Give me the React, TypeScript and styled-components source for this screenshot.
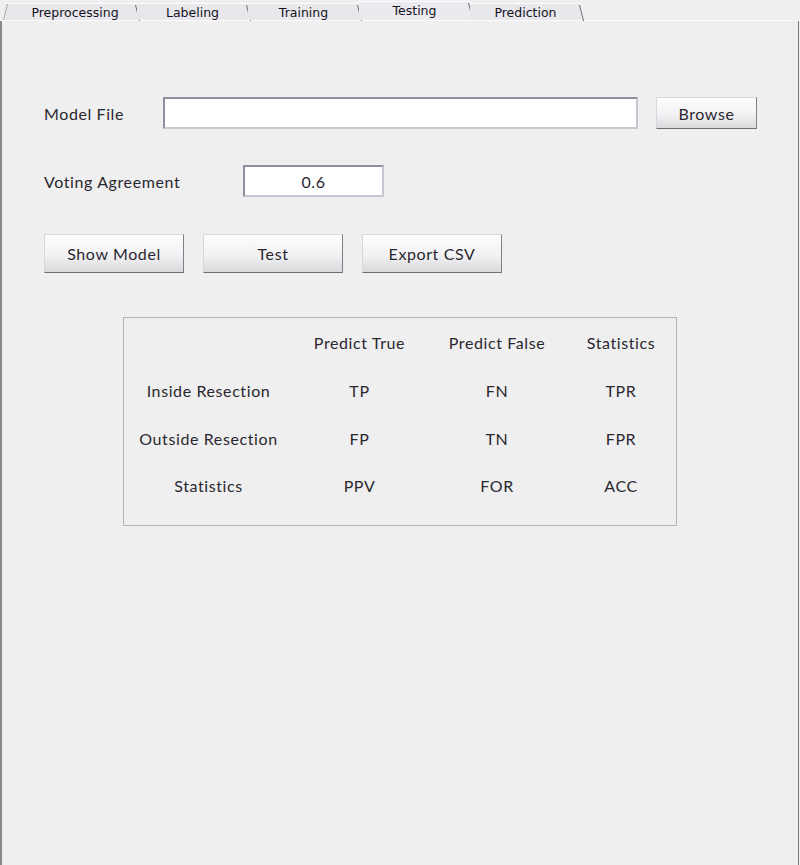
import React from "react";
import styled, { createGlobalStyle } from "styled-components";

const Global = createGlobalStyle`
  html, body { margin: 0; padding: 0; background: #efefef; }
  body { font-family: Lato, "Open Sans", sans-serif; color: #2a2731; }
  #root { width: 800px; height: 865px; }
`;

const Frame = styled.div`
  width: 800px;
  height: 865px;
  display: flex;
  flex-direction: column;
  background: #efefef;
  box-sizing: border-box;
  overflow: hidden;
`;

const TabBar = styled.div`
  height: 21px;
  display: flex;
  align-items: flex-end;
  padding-left: 5px;
  box-sizing: border-box;
  border-bottom: 1px solid #fbfbfb;
`;

const Tab = styled.div<{ $selected?: boolean; $first?: boolean }>`
  position: relative;
  width: ${(p) => (p.$first ? 132 : 111)}px;
  height: ${(p) => (p.$selected ? 19 : 17)}px;
  box-sizing: border-box;
  background: ${(p) => (p.$selected ? "#ebeaef" : "#e8e7ec")};
  border-top: 1px solid #fdfdfd;
  font-family: "DejaVu Sans", sans-serif;
  font-size: 12.5px;
  color: #14121c;
  display: flex;
  align-items: center;
  justify-content: center;
  padding-left: ${(p) => (p.$first ? 8 : 0)}px;
  padding-bottom: ${(p) => (p.$selected ? 2 : 0)}px;
  &::after {
    content: "";
    position: absolute;
    right: 1px;
    top: 1px;
    height: 16px;
    border-left: 1px solid #6e6e74;
    transform: skewX(14deg);
    transform-origin: top;
  }
  ${(p) =>
    p.$first
      ? `&::before {
    content: "";
    position: absolute;
    left: 2px;
    top: 0px;
    height: 16px;
    border-left: 1px solid #a8a8ae;
    transform: skewX(-14deg);
    transform-origin: top;
  }`
      : ""}
`;

const Panel = styled.div`
  flex: 1;
  border-left: 2px solid #8a8a8a;
  border-right: 1px solid #7a7a7a;
  margin-right: 1px;
  padding: 76px 0 0 42px;
  box-sizing: border-box;
  display: flex;
  flex-direction: column;
`;

const Row = styled.div<{ $mt?: number }>`
  display: flex;
  align-items: center;
  margin-top: ${(p) => p.$mt ?? 0}px;
`;

const Label = styled.div<{ $w: number }>`
  width: ${(p) => p.$w}px;
  font-size: 16px;
  letter-spacing: 0.6px;
`;

const Field = styled.div<{ $w: number }>`
  width: ${(p) => p.$w}px;
  height: 32px;
  box-sizing: border-box;
  background: #ffffff;
  border: 2px solid #c6c7d0;
  border-top-color: #8e8fa0;
  border-left-color: #8e8fa0;
  display: flex;
  align-items: center;
  justify-content: center;
  font-size: 16px;
  letter-spacing: 0.6px;
`;

const Button = styled.div<{ $w: number; $h?: number; $ml?: number }>`
  width: ${(p) => p.$w}px;
  height: ${(p) => p.$h ?? 39}px;
  margin-left: ${(p) => p.$ml ?? 0}px;
  box-sizing: border-box;
  background: linear-gradient(#fdfdfd, #f2f2f4 55%, #dadadd);
  border: 1px solid #d7d7dd;
  border-right-color: #808086;
  border-bottom-color: #6e6e74;
  display: flex;
  align-items: center;
  justify-content: center;
  font-size: 16px;
  letter-spacing: 0.6px;
`;

const Buttons = styled.div`
  display: flex;
  gap: 19px;
  margin-top: 37px;
`;

const Matrix = styled.div`
  margin: 44px 0 0 79px;
  width: 554px;
  height: 209px;
  box-sizing: border-box;
  border: 1px solid #b4b4b4;
  padding-top: 1.2px;
  display: grid;
  grid-template-columns: 169px 133px 142px 106px;
  grid-auto-rows: 47.6px;
  align-content: start;
`;

const Cell = styled.div`
  display: flex;
  align-items: center;
  justify-content: center;
  font-size: 16px;
  letter-spacing: 0.6px;
`;

const tabs = ["Preprocessing", "Labeling", "Training", "Testing", "Prediction"];
const matrix = [
  ["", "Predict True", "Predict False", "Statistics"],
  ["Inside Resection", "TP", "FN", "TPR"],
  ["Outside Resection", "FP", "TN", "FPR"],
  ["Statistics", "PPV", "FOR", "ACC"],
];

export default function App() {
  return (
    <Frame>
      <Global />
      <TabBar>
        {tabs.map((t, i) => (
          <Tab key={t} $first={i === 0} $selected={t === "Testing"}>
            {t}
          </Tab>
        ))}
      </TabBar>
      <Panel>
        <Row>
          <Label $w={119}>Model File</Label>
          <Field $w={475} />
          <Button $w={101} $h={32} $ml={18}>
            Browse
          </Button>
        </Row>
        <Row $mt={36}>
          <Label $w={199}>Voting Agreement</Label>
          <Field $w={141}>0.6</Field>
        </Row>
        <Buttons>
          <Button $w={140}>Show Model</Button>
          <Button $w={140}>Test</Button>
          <Button $w={140}>Export CSV</Button>
        </Buttons>
        <Matrix>
          {matrix.flat().map((c, i) => (
            <Cell key={i}>{c}</Cell>
          ))}
        </Matrix>
      </Panel>
    </Frame>
  );
}
